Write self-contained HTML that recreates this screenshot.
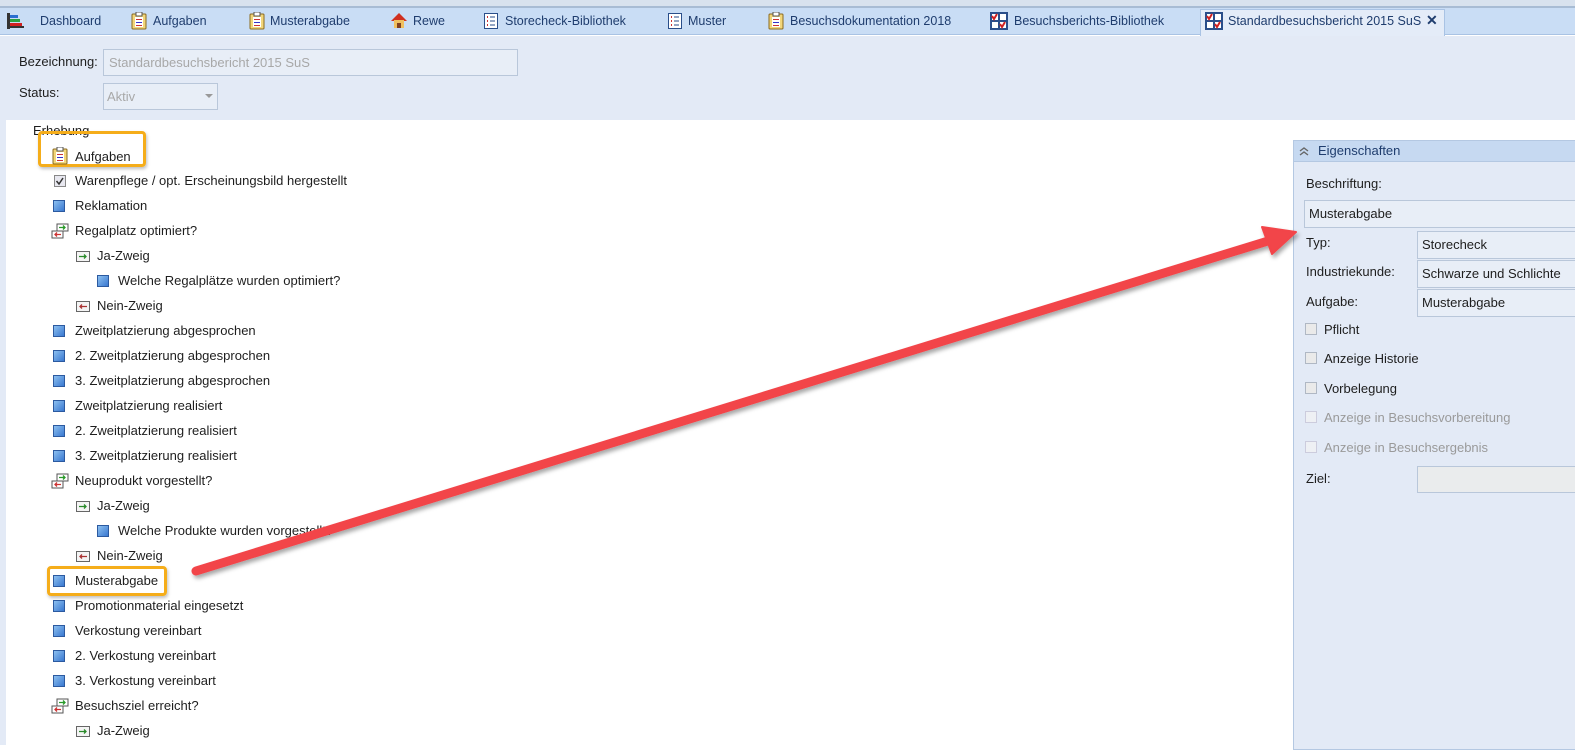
<!DOCTYPE html>
<html><head><meta charset="utf-8"><style>
*{margin:0;padding:0;box-sizing:border-box}
body{width:1575px;height:745px;overflow:hidden;background:#fff;font-family:"Liberation Sans",sans-serif;font-size:13px;color:#1e1e1e;position:relative}
.a{position:absolute;white-space:nowrap}
.sq{position:absolute;width:12px;height:12px;border:1px solid #2c5aa0;background:linear-gradient(135deg,#8cc0f0,#3a78d0)}
.inp{position:absolute;border:1px solid #b9c7da;background:#e8eef7}
.cb{position:absolute;width:12px;height:12px;border:1px solid #b0b8c4;background:#eaeaea}
.t{line-height:15px}
.tab{font-size:12.5px;color:#1f3d6e}
</style></head><body>
<div class="a" style="left:0;top:0;width:1575px;height:8px;background:#d8e2ee;border-bottom:2px solid #a8bcd4"></div>
<div class="a" style="left:0;top:8px;width:1575px;height:27px;background:#c9ddf5;border-bottom:1px solid #a9c3e4"></div>
<svg class="a" style="left:7px;top:13px" width="18" height="16"><rect x="0" y="0" width="3" height="16" fill="#333"/><rect x="3" y="2" width="8" height="3" fill="#2a6fd0"/><rect x="3" y="6" width="10" height="3" fill="#2aa040"/><rect x="3" y="10" width="12" height="3" fill="#d02020"/><rect x="0" y="13" width="17" height="2" fill="#333"/></svg>
<div class="a t tab" style="left:40px;top:14px">Dashboard</div>
<svg class="a" style="left:131px;top:12px" width="16" height="18"><rect x="1" y="2" width="14" height="15" rx="1" fill="#f2d67a" stroke="#8a6a20"/><rect x="4" y="5" width="8" height="10" fill="#fff"/><rect x="5" y="0" width="6" height="4" fill="#fff" stroke="#555"/><rect x="5" y="7" width="6" height="1" fill="#c33"/><rect x="5" y="10" width="6" height="1" fill="#33c"/><rect x="5" y="13" width="6" height="1" fill="#c33"/></svg>
<div class="a t tab" style="left:153px;top:14px">Aufgaben</div>
<svg class="a" style="left:249px;top:12px" width="16" height="18"><rect x="1" y="2" width="14" height="15" rx="1" fill="#f2d67a" stroke="#8a6a20"/><rect x="4" y="5" width="8" height="10" fill="#fff"/><rect x="5" y="0" width="6" height="4" fill="#fff" stroke="#555"/><rect x="5" y="7" width="6" height="1" fill="#c33"/><rect x="5" y="10" width="6" height="1" fill="#33c"/><rect x="5" y="13" width="6" height="1" fill="#c33"/></svg>
<div class="a t tab" style="left:270px;top:14px">Musterabgabe</div>
<svg class="a" style="left:390px;top:12px" width="18" height="17"><path d="M1 9 L9 1 L17 9 Z" fill="#d03020"/><rect x="4" y="8" width="10" height="8" fill="#f0c060"/><rect x="7" y="11" width="4" height="5" fill="#804020"/></svg>
<div class="a t tab" style="left:413px;top:14px">Rewe</div>
<svg class="a" style="left:484px;top:13px" width="14" height="16"><rect x="0.5" y="0.5" width="13" height="15" fill="#fff" stroke="#2a4e8a"/><path d="M3 4h1M3 8h1M3 12h1" stroke="#c33" stroke-width="2"/><path d="M6 4h5M6 8h5M6 12h5" stroke="#2a4e8a"/></svg>
<div class="a t tab" style="left:505px;top:14px">Storecheck-Bibliothek</div>
<svg class="a" style="left:668px;top:13px" width="14" height="16"><rect x="0.5" y="0.5" width="13" height="15" fill="#fff" stroke="#2a4e8a"/><path d="M3 4h1M3 8h1M3 12h1" stroke="#c33" stroke-width="2"/><path d="M6 4h5M6 8h5M6 12h5" stroke="#2a4e8a"/></svg>
<div class="a t tab" style="left:688px;top:14px">Muster</div>
<svg class="a" style="left:768px;top:12px" width="16" height="18"><rect x="1" y="2" width="14" height="15" rx="1" fill="#f2d67a" stroke="#8a6a20"/><rect x="4" y="5" width="8" height="10" fill="#fff"/><rect x="5" y="0" width="6" height="4" fill="#fff" stroke="#555"/><rect x="5" y="7" width="6" height="1" fill="#c33"/><rect x="5" y="10" width="6" height="1" fill="#33c"/><rect x="5" y="13" width="6" height="1" fill="#c33"/></svg>
<div class="a t tab" style="left:790px;top:14px">Besuchsdokumentation 2018</div>
<svg class="a" style="left:990px;top:12px" width="18" height="18"><rect x="1" y="1" width="16" height="16" fill="#fff" stroke="#2a4e8a" stroke-width="2"/><path d="M9 1v16M1 9h16" stroke="#2a4e8a" stroke-width="2"/><path d="M2 4l2 3 3-5M10 12l2 3 3-5" stroke="#d02020" stroke-width="2" fill="none"/></svg>
<div class="a t tab" style="left:1014px;top:14px">Besuchsberichts-Bibliothek</div>
<div class="a" style="left:1200px;top:9px;width:245px;height:27px;background:#e4ecf8;border:1px solid #a9c3e4;border-bottom:none"></div>
<svg class="a" style="left:1205px;top:12px" width="18" height="18"><rect x="1" y="1" width="16" height="16" fill="#fff" stroke="#2a4e8a" stroke-width="2"/><path d="M9 1v16M1 9h16" stroke="#2a4e8a" stroke-width="2"/><path d="M2 4l2 3 3-5M10 12l2 3 3-5" stroke="#d02020" stroke-width="2" fill="none"/></svg>
<div class="a t tab" style="left:1228px;top:14px">Standardbesuchsbericht 2015 SuS</div>
<div class="a t" style="left:1426px;top:13px;font-weight:bold;font-size:14px;color:#1f3d6e">✕</div>
<div class="a" style="left:0;top:36px;width:1575px;height:84px;background:#e3eaf6"></div>
<div class="a t" style="left:19px;top:54px">Bezeichnung:</div>
<div class="inp" style="left:103px;top:49px;width:415px;height:27px"></div>
<div class="a t" style="left:109px;top:55px;color:#a8a8a8">Standardbesuchsbericht 2015 SuS</div>
<div class="a t" style="left:19px;top:85px">Status:</div>
<div class="inp" style="left:103px;top:83px;width:115px;height:27px"></div>
<div class="a t" style="left:107px;top:89px;color:#a8a8a8">Aktiv</div>
<div class="a" style="left:205px;top:94px;border:4px solid transparent;border-top:4px solid #999"></div>
<div class="a" style="left:0;top:120px;width:6px;height:625px;background:#e3eaf6"></div>
<div class="a t" style="left:33px;top:123px">Erhebung</div>
<div class="a" style="left:38px;top:131px;width:108px;height:36px;border:3px solid #f5ad1a;border-radius:4px;box-shadow:1px 2px 3px rgba(0,0,0,.25)"></div>
<svg class="a" style="left:52px;top:147px" width="16" height="18"><rect x="1" y="2" width="14" height="15" rx="1" fill="#f2d67a" stroke="#8a6a20"/><rect x="4" y="5" width="8" height="10" fill="#fff"/><rect x="5" y="0" width="6" height="4" fill="#fff" stroke="#555"/><rect x="5" y="7" width="6" height="1" fill="#c33"/><rect x="5" y="10" width="6" height="1" fill="#33c"/><rect x="5" y="13" width="6" height="1" fill="#c33"/></svg>
<div class="a t" style="left:75px;top:149px">Aufgaben</div>
<svg class="a" style="left:54px;top:175px" width="12" height="12"><rect x="0.5" y="0.5" width="11" height="11" fill="#e8e8f0" stroke="#888"/><path d="M2.5 6l2.5 3 4-6" stroke="#333" stroke-width="1.5" fill="none"/></svg>
<div class="a t" style="left:75px;top:173px">Warenpflege / opt. Erscheinungsbild hergestellt</div>
<div class="sq" style="left:53px;top:200px"></div><div class="a t" style="left:75px;top:198px">Reklamation</div>
<svg class="a" style="left:51px;top:223px" width="18" height="16"><rect x="6" y="1" width="11" height="7" fill="#fff" stroke="#555"/><path d="M8 4.5h6M12 2.5l2 2-2 2" stroke="#2a9a2a" stroke-width="1.3" fill="none"/><rect x="1" y="8" width="11" height="7" fill="#fff" stroke="#555"/><path d="M4 11.5h6M6 9.5l-2 2 2 2" stroke="#c33" stroke-width="1.3" fill="none"/></svg>
<div class="a t" style="left:75px;top:223px">Regalplatz optimiert?</div>
<svg class="a" style="left:76px;top:251px" width="14" height="11"><rect x="0.5" y="0.5" width="13" height="10" fill="#f4f4f4" stroke="#666"/><path d="M3 5.5h7M8 3.5l2 2-2 2" stroke="#2a8a2a" stroke-width="1.3" fill="none"/></svg>
<div class="a t" style="left:97px;top:248px">Ja-Zweig</div>
<div class="sq" style="left:97px;top:275px"></div><div class="a t" style="left:118px;top:273px">Welche Regalplätze wurden optimiert?</div>
<svg class="a" style="left:76px;top:301px" width="14" height="11"><rect x="0.5" y="0.5" width="13" height="10" fill="#f4f4f4" stroke="#666"/><path d="M4 5.5h7M6 3.5l-2 2 2 2" stroke="#a33" stroke-width="1.3" fill="none"/></svg>
<div class="a t" style="left:97px;top:298px">Nein-Zweig</div>
<div class="sq" style="left:53px;top:325px"></div><div class="a t" style="left:75px;top:323px">Zweitplatzierung abgesprochen</div>
<div class="sq" style="left:53px;top:350px"></div><div class="a t" style="left:75px;top:348px">2. Zweitplatzierung abgesprochen</div>
<div class="sq" style="left:53px;top:375px"></div><div class="a t" style="left:75px;top:373px">3. Zweitplatzierung abgesprochen</div>
<div class="sq" style="left:53px;top:400px"></div><div class="a t" style="left:75px;top:398px">Zweitplatzierung realisiert</div>
<div class="sq" style="left:53px;top:425px"></div><div class="a t" style="left:75px;top:423px">2. Zweitplatzierung realisiert</div>
<div class="sq" style="left:53px;top:450px"></div><div class="a t" style="left:75px;top:448px">3. Zweitplatzierung realisiert</div>
<svg class="a" style="left:51px;top:473px" width="18" height="16"><rect x="6" y="1" width="11" height="7" fill="#fff" stroke="#555"/><path d="M8 4.5h6M12 2.5l2 2-2 2" stroke="#2a9a2a" stroke-width="1.3" fill="none"/><rect x="1" y="8" width="11" height="7" fill="#fff" stroke="#555"/><path d="M4 11.5h6M6 9.5l-2 2 2 2" stroke="#c33" stroke-width="1.3" fill="none"/></svg>
<div class="a t" style="left:75px;top:473px">Neuprodukt vorgestellt?</div>
<svg class="a" style="left:76px;top:501px" width="14" height="11"><rect x="0.5" y="0.5" width="13" height="10" fill="#f4f4f4" stroke="#666"/><path d="M3 5.5h7M8 3.5l2 2-2 2" stroke="#2a8a2a" stroke-width="1.3" fill="none"/></svg>
<div class="a t" style="left:97px;top:498px">Ja-Zweig</div>
<div class="sq" style="left:97px;top:525px"></div><div class="a t" style="left:118px;top:523px">Welche Produkte wurden vorgestellt?</div>
<svg class="a" style="left:76px;top:551px" width="14" height="11"><rect x="0.5" y="0.5" width="13" height="10" fill="#f4f4f4" stroke="#666"/><path d="M4 5.5h7M6 3.5l-2 2 2 2" stroke="#a33" stroke-width="1.3" fill="none"/></svg>
<div class="a t" style="left:97px;top:548px">Nein-Zweig</div>
<div class="a" style="left:47px;top:566px;width:120px;height:30px;border:3px solid #f5ad1a;border-radius:4px;box-shadow:1px 2px 3px rgba(0,0,0,.25)"></div>
<div class="sq" style="left:53px;top:575px"></div><div class="a t" style="left:75px;top:573px">Musterabgabe</div>
<div class="sq" style="left:53px;top:600px"></div><div class="a t" style="left:75px;top:598px">Promotionmaterial eingesetzt</div>
<div class="sq" style="left:53px;top:625px"></div><div class="a t" style="left:75px;top:623px">Verkostung vereinbart</div>
<div class="sq" style="left:53px;top:650px"></div><div class="a t" style="left:75px;top:648px">2. Verkostung vereinbart</div>
<div class="sq" style="left:53px;top:675px"></div><div class="a t" style="left:75px;top:673px">3. Verkostung vereinbart</div>
<svg class="a" style="left:51px;top:698px" width="18" height="16"><rect x="6" y="1" width="11" height="7" fill="#fff" stroke="#555"/><path d="M8 4.5h6M12 2.5l2 2-2 2" stroke="#2a9a2a" stroke-width="1.3" fill="none"/><rect x="1" y="8" width="11" height="7" fill="#fff" stroke="#555"/><path d="M4 11.5h6M6 9.5l-2 2 2 2" stroke="#c33" stroke-width="1.3" fill="none"/></svg>
<div class="a t" style="left:75px;top:698px">Besuchsziel erreicht?</div>
<svg class="a" style="left:76px;top:726px" width="14" height="11"><rect x="0.5" y="0.5" width="13" height="10" fill="#f4f4f4" stroke="#666"/><path d="M3 5.5h7M8 3.5l2 2-2 2" stroke="#2a8a2a" stroke-width="1.3" fill="none"/></svg>
<div class="a t" style="left:97px;top:723px">Ja-Zweig</div>
<div class="a" style="left:1293px;top:140px;width:290px;height:610px;background:#e3eaf6;border:1px solid #b4c8e2"></div>
<div class="a" style="left:1294px;top:141px;width:290px;height:21px;background:#c6d9f1;border-bottom:1px solid #b4c8e2"></div>
<svg class="a" style="left:1299px;top:146px" width="10" height="10"><path d="M1 5l4-3 4 3M1 9l4-3 4 3" stroke="#666" stroke-width="1.4" fill="none"/></svg>
<div class="a t" style="left:1318px;top:143px;color:#1f3d6e">Eigenschaften</div>
<div class="a t" style="left:1306px;top:176px">Beschriftung:</div>
<div class="inp" style="left:1304px;top:200px;width:280px;height:28px"></div>
<div class="a t" style="left:1309px;top:206px">Musterabgabe</div>
<div class="a t" style="left:1306px;top:235px">Typ:</div>
<div class="inp" style="left:1417px;top:231px;width:170px;height:28px"></div>
<div class="a t" style="left:1422px;top:237px">Storecheck</div>
<div class="a t" style="left:1306px;top:264px">Industriekunde:</div>
<div class="inp" style="left:1417px;top:260px;width:170px;height:28px"></div>
<div class="a t" style="left:1422px;top:266px">Schwarze und Schlichte</div>
<div class="a t" style="left:1306px;top:294px">Aufgabe:</div>
<div class="inp" style="left:1417px;top:289px;width:170px;height:28px"></div>
<div class="a t" style="left:1422px;top:295px">Musterabgabe</div>
<div class="cb" style="left:1305px;top:323px"></div><div class="a t" style="left:1324px;top:322px">Pflicht</div>
<div class="cb" style="left:1305px;top:352px"></div><div class="a t" style="left:1324px;top:351px">Anzeige Historie</div>
<div class="cb" style="left:1305px;top:382px"></div><div class="a t" style="left:1324px;top:381px">Vorbelegung</div>
<div class="cb" style="left:1305px;top:411px;border-color:#ccd;background:#eef0f4"></div><div class="a t" style="left:1324px;top:410px;color:#9a9a9a">Anzeige in Besuchsvorbereitung</div>
<div class="cb" style="left:1305px;top:441px;border-color:#ccd;background:#eef0f4"></div><div class="a t" style="left:1324px;top:440px;color:#9a9a9a">Anzeige in Besuchsergebnis</div>
<div class="a t" style="left:1306px;top:471px">Ziel:</div>
<div class="inp" style="left:1417px;top:466px;width:170px;height:27px;background:#eaeced"></div>
<svg class="a" style="left:0;top:0" width="1575" height="745">
<defs><filter id="s"><feDropShadow dx="2" dy="3" stdDeviation="2" flood-opacity="0.35"/></filter></defs>
<g filter="url(#s)" fill="#f2444a" stroke="#f2444a">
<line x1="196" y1="571" x2="1268" y2="241" stroke-width="9" stroke-linecap="round"/>
<path d="M1296 232 L1262 227 L1272 254 Z" stroke-width="2" stroke-linejoin="round"/>
</g></svg>
</body></html>
